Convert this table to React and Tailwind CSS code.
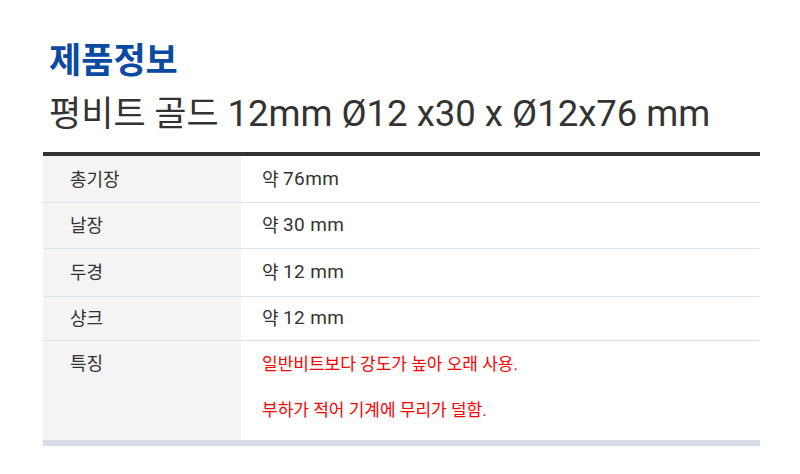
import React from 'react';

const rows = [
  { label: '총기장', value: '76mm', h: 'h-[47px]' },
  { label: '날장', value: '30 mm', h: 'h-[46px]' },
  { label: '두경', value: '12 mm', h: 'h-[48px]' },
  { label: '샹크', value: '12 mm', h: 'h-[44px]' },
];

const App = () => {
  return (
    <div
      className="w-[800px] h-[474px] bg-white overflow-hidden"
      style={{ fontFamily: 'Roboto, "Noto Sans CJK KR", sans-serif' }}
    >
      <div className="pl-[49px] pt-[40px]">
        <h1 className="text-[35px] leading-[44px] font-bold text-[#0b4aa2]">제품정보</h1>
        <h2 className="text-[35px] leading-[46px] text-[#333333] mt-[7px]">
          평비트 골드 <span className="text-[36.5px]">12mm Ø12 x30 x Ø12x76 mm</span>
        </h2>
      </div>

      <div className="ml-[43px] mr-[40px] mt-[14px] border-t-4 border-[#333333] border-b-[6px] border-b-[#d8dde6]">
        {rows.map((row) => (
          <div key={row.label} className={`flex border-b border-[#dde1ea] ${row.h}`}>
            <div className="w-[198px] bg-[#f4f4f5] pl-[27px] flex items-center text-[18px] text-[#333]">
              {row.label}
            </div>
            <div className="flex-1 pl-[21px] flex items-center text-[18px] text-[#333]">
              <span>약&nbsp;</span>
              <span className="text-[19px] tracking-[0.4px]">{row.value}</span>
            </div>
          </div>
        ))}
        <div className="flex h-[99px]">
          <div className="w-[198px] bg-[#f4f4f5] pl-[27px] pt-[11px] text-[18px] leading-[24px] text-[#333]">특징</div>
          <div className="flex-1 pl-[21px] pt-[11px] text-[17px] text-[#ff0000] leading-[24px]">
            <p>일반비트보다 강도가 높아 오래 사용.</p>
            <p className="mt-[22px]">부하가 적어 기계에 무리가 덜함.</p>
          </div>
        </div>
      </div>
    </div>
  );
};

export default App;
